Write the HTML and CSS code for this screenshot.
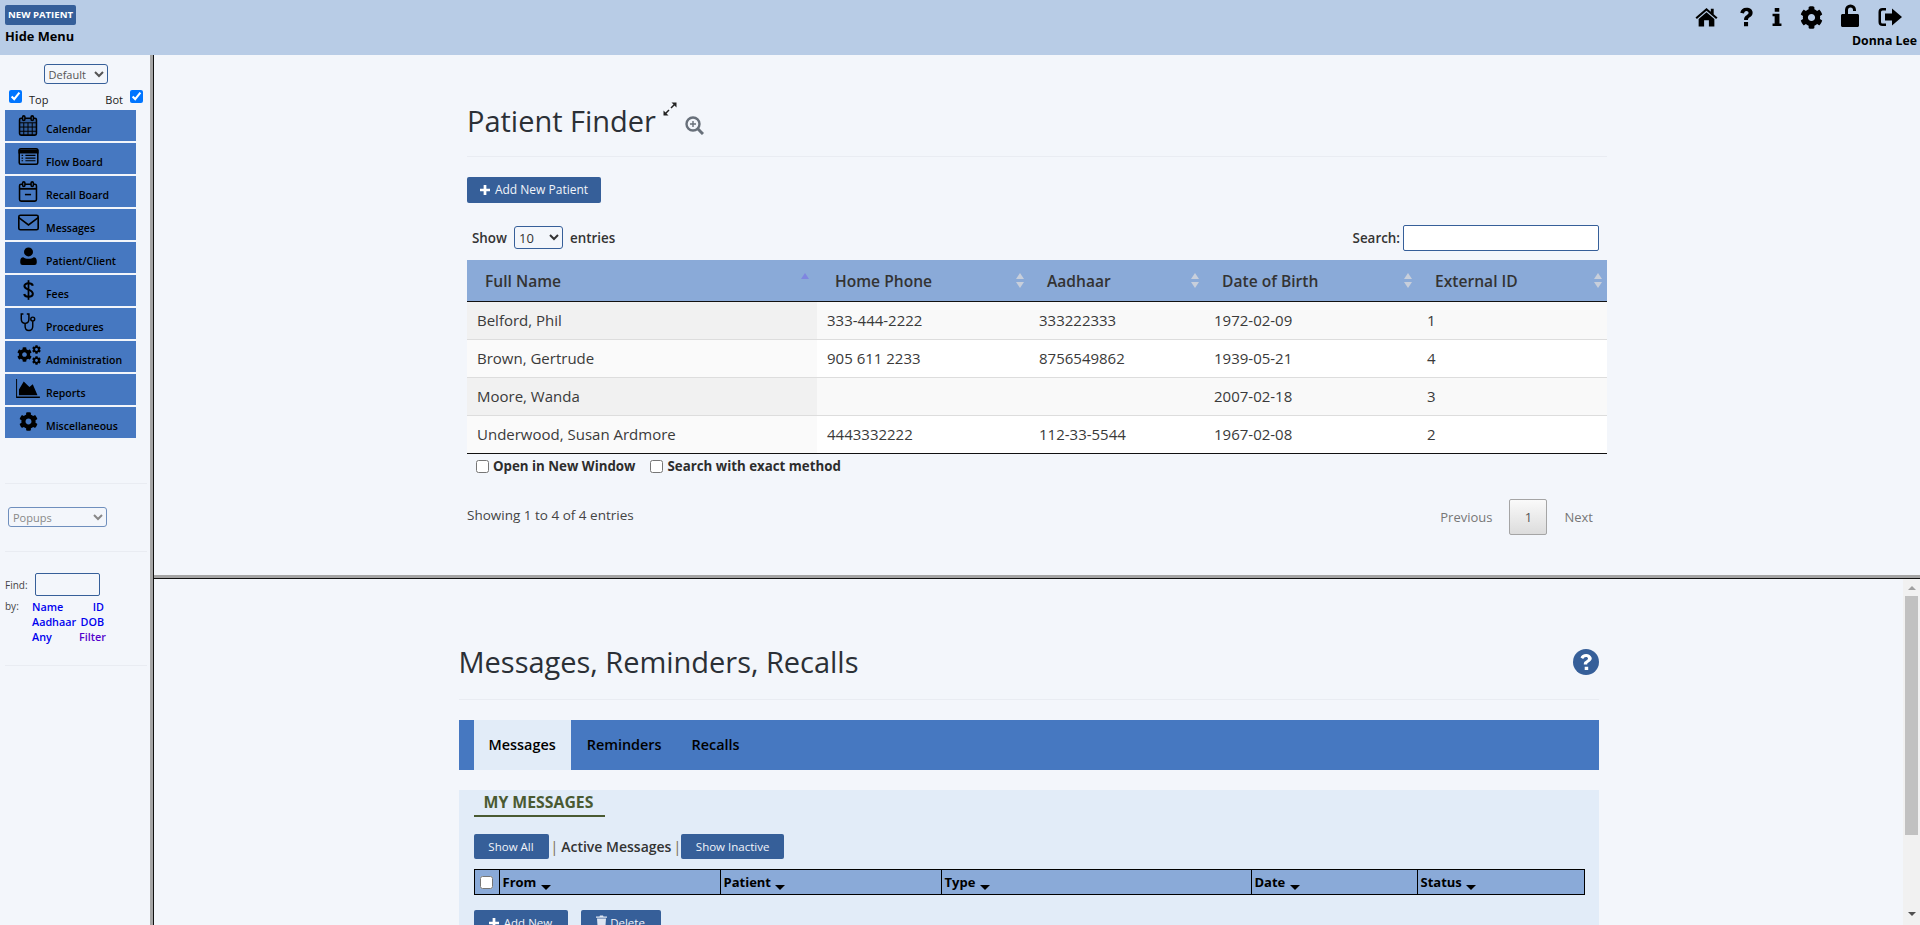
FILE: index.html
```html
<!DOCTYPE html>
<html lang="en">
<head>
  <meta charset="UTF-8">
  <title>OpenEMR</title>
  <link rel="stylesheet" href="styles.css">
</head>
<body>

  <svg class="defs" width="0" height="0">
    <symbol id="cog" viewBox="0 0 512 512">
      <path d="M487.4 315.7l-42.6-24.6c4.3-23.2 4.3-47 0-70.2l42.6-24.6c4.9-2.8 7.1-8.6 5.5-14-11.1-35.6-30-67.8-54.7-94.6-3.8-4.1-10-5.1-14.8-2.3L380.8 110c-17.9-15.4-38.5-27.3-60.8-35.1V25.8c0-5.6-3.9-10.5-9.4-11.7-36.7-8.2-74.3-7.8-109.2 0-5.5 1.2-9.4 6.1-9.4 11.7V75c-22.2 7.9-42.8 19.8-60.8 35.1L88.7 85.5c-4.9-2.8-11-1.9-14.8 2.3-24.7 26.7-43.6 58.9-54.7 94.6-1.7 5.4.6 11.2 5.5 14L67.3 221c-4.3 23.2-4.3 47 0 70.2l-42.6 24.6c-4.9 2.8-7.1 8.6-5.5 14 11.1 35.6 30 67.8 54.7 94.6 3.8 4.1 10 5.1 14.8 2.3l42.6-24.6c17.9 15.4 38.5 27.3 60.8 35.1v49.2c0 5.6 3.9 10.5 9.4 11.7 36.7 8.2 74.3 7.8 109.2 0 5.5-1.2 9.4-6.1 9.4-11.7v-49.2c22.2-7.9 42.8-19.8 60.8-35.1l42.6 24.6c4.9 2.8 11 1.9 14.8-2.3 24.7-26.7 43.6-58.9 54.7-94.6 1.5-5.5-.7-11.3-5.6-14.1zM256 336c-44.1 0-80-35.9-80-80s35.9-80 80-80 80 35.9 80 80-35.9 80-80 80z"/>
    </symbol>
    <symbol id="plus" viewBox="0 0 11 11">
      <path d="M4 0h3v4h4v3H7v4H4V7H0V4h4z"/>
    </symbol>
  </svg>

  <!-- Top bar -->
  <header class="topbar">
    <div class="topbar-left">
      <a class="new-patient">NEW PATIENT</a>
      <div class="hide-menu">Hide Menu</div>
    </div>
    <div class="topbar-right">
      <div class="top-icons">
        <svg class="ti ti-home" viewBox="0 0 24 20"><path d="M12 0.5 L0.5 10.5 L2 12 L12 3.4 L22 12 L23.5 10.5 L19.5 7 V1.5 H16.5 V4.4 Z M12 5 L3.8 12 V20 H9.5 V13.5 H14.5 V20 H20.2 V12 Z"/></svg>
        <svg class="ti ti-help" viewBox="0 0 14 20"><path d="M7 0C3 0 .8 2.2.3 5.4l4 .8C4.6 4.6 5.4 3.6 6.9 3.6c1.3 0 2.3.8 2.3 1.9 0 1-.7 1.6-2 2.5-1.8 1.2-2.8 2.4-2.8 4.4v.8h4.2v-.5c0-1 .5-1.5 1.9-2.5C12.300 9.100 13.600 7.800 13.600 5.300 13.600 2.100 10.900 0 7 0zM4.300 15.500h4.400V20H4.300z"/></svg>
        <svg class="ti ti-info" viewBox="0 0 11 20"><path d="M3 0h5v4.200H3zM.6 6.300h7.600v10.900h2.200V20H.6v-2.800h2.300V9.100H.6z"/></svg>
        <svg class="ti ti-cog"><use href="#cog"/></svg>
        <svg class="ti ti-unlock" viewBox="0 0 18 23"><path d="M4 10V6a5.500 5.500 0 0 1 11 0v1h-3V6a2.500 2.500 0 0 0-5 0v4h9.500c.8 0 1.500.7 1.500 1.500v10c0 .8-.7 1.500-1.500 1.500H1.500C.7 23 0 22.300 0 21.500v-10C0 10.700.7 10 1.500 10z"/></svg>
        <svg class="ti ti-signout" viewBox="0 0 24 20"><path d="M8 1H4.500A4 4 0 0 0 .5 5v10a4 4 0 0 0 4 4H8v-2.500H4.500A1.500 1.500 0 0 1 3 15V5a1.500 1.500 0 0 1 1.500-1.500H8zM14 1.500L24 10 14 18.500V13.500H7v-7h7z"/></svg>
      </div>
      <div class="user-name">Donna Lee</div>
    </div>
  </header>

  <div class="layout">

    <!-- Left menu -->
    <aside class="sidebar">
      <div class="side-select">
        <select class="sel-default"><option>Default</option></select>
      </div>
      <div class="side-checks">
        <label class="chk-top"><input type="checkbox" checked><span>Top</span></label>
        <label class="chk-bot"><span>Bot</span><input type="checkbox" checked></label>
      </div>

      <nav class="menu">
        <a class="menu-item">
          <span class="mi-icon"><svg width="20" height="21" viewBox="0 0 26 27" fill="none" stroke="#000" stroke-width="2"><rect x="2" y="4" width="22" height="22" rx="2" fill="#2f5a97"/><path d="M2 10h22M2 15.500h22M2 21h22M7.500 10v16M13 10v16M18.500 10v16" stroke-width="1.300"/><rect x="6" y="1" width="3" height="6" rx="1.500" fill="#4678c1"/><rect x="17" y="1" width="3" height="6" rx="1.500" fill="#4678c1"/></svg></span>
          <span>Calendar</span>
        </a>
        <a class="menu-item">
          <span class="mi-icon"><svg width="21" height="17" viewBox="0 0 26 22" fill="none" stroke="#000" stroke-width="2"><rect x="1" y="1" width="24" height="20" rx="2"/><path d="M1 3h24v3H1z" fill="#000"/><path d="M9 9.500h13M9 13h13M9 16.500h13M4 9.500h2M4 13h2M4 16.500h2" stroke-width="1.600"/></svg></span>
          <span>Flow Board</span>
        </a>
        <a class="menu-item">
          <span class="mi-icon"><svg width="20" height="21" viewBox="0 0 26 27" fill="none" stroke="#000" stroke-width="2"><rect x="2" y="4" width="22" height="22" rx="2"/><path d="M2 10h22" stroke-width="2.400"/><path d="M9 17.500h8"/><rect x="6" y="1" width="3" height="6" rx="1.500" fill="#4678c1"/><rect x="17" y="1" width="3" height="6" rx="1.500" fill="#4678c1"/></svg></span>
          <span>Recall Board</span>
        </a>
        <a class="menu-item">
          <span class="mi-icon"><svg width="21" height="17" viewBox="0 0 26 20" fill="none" stroke="#000" stroke-width="2"><rect x="1" y="1" width="24" height="18" rx="2"/><path d="M1 4l12 9 12-9"/></svg></span>
          <span>Messages</span>
        </a>
        <a class="menu-item">
          <span class="mi-icon"><svg width="17" height="18" viewBox="0 0 22 24"><circle cx="11" cy="6.500" r="6"/><path d="M4 13.500c2 1.500 4 2 7 2s5-.5 7-2c2.500 0 4 2 4 5v2.500a3 3 0 0 1-3 3H3a3 3 0 0 1-3-3v-2.500c0-3 1.500-5 4-5z"/></svg></span>
          <span>Patient/Client</span>
        </a>
        <a class="menu-item">
          <span class="mi-icon"><svg width="11" height="20" viewBox="0 0 14 25" fill="none" stroke="#000" stroke-width="2.600"><path d="M12.500 7C12 4.800 10 4 7 4S1.800 5.200 1.800 7.500c0 5 10.700 4 10.700 9.800 0 2.500-2.500 3.700-5.500 3.700S2 20 1.500 17.500"/><path d="M7 0v25" stroke-width="2.200"/></svg></span>
          <span>Fees</span>
        </a>
        <a class="menu-item">
          <span class="mi-icon"><svg width="17" height="19" viewBox="0 0 20 22" fill="none" stroke="#000" stroke-width="1.700"><path d="M4 1H1.500v6c0 3 2 5 4.500 5s4.500-2 4.500-5V1H8"/><path d="M6 12v3.500c0 3 2 5 4.500 5s4.500-2 4.500-5V9.500"/><circle cx="15" cy="7" r="2.300"/></svg></span>
          <span>Procedures</span>
        </a>
        <a class="menu-item">
          <span class="mi-icon mi-cogs">
            <svg class="cog-big"><use href="#cog"/></svg>
            <svg class="cog-small"><use href="#cog"/></svg>
            <svg class="cog-small"><use href="#cog"/></svg>
          </span>
          <span>Administration</span>
        </a>
        <a class="menu-item">
          <span class="mi-icon"><svg width="24" height="19" viewBox="0 0 25 20"><path d="M0 0h1v18.500h24V20H0z"/><path d="M3 17V11L8 2.500l6 6 3.500-3 5 11.500z"/></svg></span>
          <span>Reports</span>
        </a>
        <a class="menu-item">
          <span class="mi-icon"><svg width="19" height="19"><use href="#cog"/></svg></span>
          <span>Miscellaneous</span>
        </a>
      </nav>

      <hr class="side-rule first-rule">
      <div class="side-popups">
        <select class="sel-popups"><option>Popups</option></select>
      </div>
      <hr class="side-rule">
      <div class="find-box">
        <div class="find-row"><span>Find:</span><input type="text" class="find-input"></div>
        <div class="find-by">
          <span class="by-label">by:</span>
          <a>Name</a><a class="r">ID</a>
          <span></span>
          <a>Aadhaar</a><a class="r">DOB</a>
          <span></span>
          <a>Any</a><a class="r filter">Filter</a>
        </div>
      </div>
      <hr class="side-rule">
    </aside>

    <div class="frames">

      <!-- Top frame -->
      <section class="frame-top">
        <div class="container">
          <div class="title-row">
            <h2>Patient Finder</h2>
            <svg class="icon-expand" width="14" height="14" viewBox="0 0 14 14" fill="none" stroke="#222" stroke-width="1.500"><path d="M2 12L6 8M8 6L12 2"/><path d="M.5 8.500v5h5z" fill="#222" stroke="none"/><path d="M13.500 5.500v-5h-5z" fill="#222" stroke="none"/></svg>
            <svg class="icon-zoom" width="19" height="19" viewBox="0 0 19 19" fill="none" stroke="#68707a" stroke-width="2.400"><circle cx="8" cy="8" r="6.500"/><path d="M12.500 12.500L18 18" stroke-width="3"/><path d="M8 5v6M5 8h6" stroke-width="1.400"/></svg>
          </div>
          <hr class="title-rule">
          <a class="btn btn-add"><svg class="plus"><use href="#plus"/></svg>Add New Patient</a>

          <div class="table-tools">
            <label class="len">Show <select class="sel-len"><option>10</option></select> entries</label>
            <label class="search">Search: <input type="text"></label>
          </div>

          <table class="pt-table">
            <colgroup>
              <col class="c-name"><col class="c-phone"><col class="c-aadhaar"><col class="c-dob"><col class="c-ext">
            </colgroup>
            <thead>
              <tr>
                <th class="sort-asc">Full Name</th>
                <th>Home Phone</th>
                <th>Aadhaar</th>
                <th>Date of Birth</th>
                <th>External ID</th>
              </tr>
            </thead>
            <tbody>
              <tr><td>Belford, Phil</td><td>333-444-2222</td><td>333222333</td><td>1972-02-09</td><td>1</td></tr>
              <tr><td>Brown, Gertrude</td><td>905 611 2233</td><td>8756549862</td><td>1939-05-21</td><td>4</td></tr>
              <tr><td>Moore, Wanda</td><td></td><td></td><td>2007-02-18</td><td>3</td></tr>
              <tr><td>Underwood, Susan Ardmore</td><td>4443332222</td><td>112-33-5544</td><td>1967-02-08</td><td>2</td></tr>
            </tbody>
          </table>

          <div class="table-opts">
            <label><input type="checkbox">Open in New Window</label>
            <label><input type="checkbox">Search with exact method</label>
          </div>

          <div class="table-foot">
            <div class="info">Showing 1 to 4 of 4 entries</div>
            <div class="pager">
              <a>Previous</a>
              <a class="current">1</a>
              <a>Next</a>
            </div>
          </div>
        </div>
      </section>

      <!-- Bottom frame -->
      <section class="frame-bottom">
        <div class="frame-scroll">
          <div class="container">
            <div class="title-row msg-title">
              <h2>Messages, Reminders, Recalls</h2>
              <svg class="icon-help" width="26" height="26" viewBox="0 0 26 26"><circle cx="13" cy="13" r="13" fill="#365f99"/><path fill="#fff" d="M13.200 5c-3 0-4.800 1.400-5.700 3.500l2.700 1.500c.6-1.200 1.400-2 2.800-2 1.200 0 2 .6 2 1.500 0 .8-.6 1.200-1.700 1.900-1.400.8-2.500 1.700-2.500 3.400v.7h3.400v-.4c0-.8.500-1.200 1.600-1.900 1.500-.9 3-2 3-4.100C17.800 6.500 15.700 5 13.200 5zM11.700 17.700h3.500V21h-3.500z"/></svg>
            </div>
            <hr class="title-rule">

            <ul class="tabs">
              <li class="active">Messages</li>
              <li>Reminders</li>
              <li>Recalls</li>
            </ul>

            <div class="panel">
              <div class="panel-title">MY MESSAGES</div>
              <div class="msg-filter">
                <a class="btn btn-sm">Show All</a>
                <span class="sep">|</span><b>Active Messages</b><span class="sep sep-end">|</span>
                <a class="btn btn-sm btn-inactive">Show Inactive</a>
              </div>
              <table class="msg-table">
                <colgroup>
                  <col class="m-check"><col class="m-from"><col class="m-patient"><col class="m-type"><col class="m-date"><col class="m-status">
                </colgroup>
                <tr>
                  <th class="th-check"><input type="checkbox"></th>
                  <th>From <i class="caret"></i></th>
                  <th>Patient <i class="caret"></i></th>
                  <th>Type <i class="caret"></i></th>
                  <th>Date <i class="caret"></i></th>
                  <th>Status <i class="caret"></i></th>
                </tr>
              </table>
              <div class="msg-actions">
                <a class="btn btn-sm btn-new"><svg class="plus"><use href="#plus"/></svg>Add New</a>
                <a class="btn btn-sm btn-del">
                  <svg width="11" height="12" viewBox="0 0 11 12" fill="#dfe6f2"><path d="M0 1.500h3.500L4 .5h3l.5 1H11v1.200H0zM1 3.500h9l-.6 8.500H1.600z"/></svg>
                  Delete
                </a>
              </div>
            </div>
          </div>
        </div>
        <div class="scrollbar">
          <i class="arr-up"></i>
          <div class="thumb"></div>
          <i class="arr-down"></i>
        </div>
      </section>

    </div>
  </div>

</body>
</html>
```

FILE: styles.css
```css
* { box-sizing: border-box; }

html, body {
  margin: 0;
  padding: 0;
  height: 925px;
  overflow: hidden;
}

body {
  background: #f3f6fb;
  font-family: 'Open Sans', 'Noto Sans', sans-serif;
  color: #333;
  font-size: 14px;
  display: flex;
  flex-direction: column;
}

.defs { position: absolute; }

/* top bar */
.topbar {
  height: 55px;
  flex: none;
  background: #b8cce6;
  display: flex;
  justify-content: space-between;
  color: #000;
}

.topbar-left { padding: 5px 0 0 5px; }

.new-patient {
  display: block;
  width: 71px;
  height: 20px;
  background: #365f99;
  color: #fff;
  border-radius: 2px;
  font-size: 9.6px;
  font-weight: 700;
  line-height: 20px;
  text-align: center;
  white-space: nowrap;
}

.hide-menu {
  font-size: 12.8px;
  font-weight: 700;
  margin-top: 3px;
  line-height: 16px;
}

.topbar-right {
  display: flex;
  flex-direction: column;
  align-items: flex-end;
}

.top-icons {
  height: 33px;
  width: 225px;
  display: flex;
  align-items: flex-start;
}

.ti { display: block; flex: none; margin-top: 7px; }
.ti-home { width: 23px; height: 20px; }
.ti-help { width: 13px; height: 20px; margin-left: 22px; }
.ti-info { width: 10px; height: 20px; margin-left: 19px; }
.ti-cog { width: 23px; height: 23px; margin-left: 18px; margin-top: 6px; }
.ti-unlock { width: 18px; height: 23px; margin-left: 18px; margin-top: 4px; }
.ti-signout { width: 24px; height: 20px; margin-left: 19px; }

.user-name {
  font-size: 12.3px;
  font-weight: 700;
  margin-right: 3px;
  line-height: 16px;
}

.layout {
  flex: 1;
  display: flex;
  min-height: 0;
  overflow: hidden;
}

/* left menu */
.sidebar {
  width: 154px;
  flex: none;
  border-right: 1px solid #111;
  box-shadow: inset -3px 0 0 #a5a5a5;
  padding: 9px 0 0;
  font-size: 10px;
}

.side-select { display: flex; justify-content: center; padding-right: 2px; }

select {
  font-family: inherit;
  background: #fff;
  border: 1px solid #365f99;
  border-radius: 3px;
  color: #555;
}

.sel-default {
  width: 64px;
  height: 20px;
  font-size: 11px;
  padding: 0;
  background: #f3f6fb;
}

.side-checks {
  display: flex;
  justify-content: space-between;
  padding: 6px 7px 0 9px;
  height: 26px;
  width: 150px;
  color: #222;
}

.side-checks label { display: flex; align-items: flex-start; gap: 7px; font-size: 11px; }
.side-checks span { margin-top: 2px; }
.side-checks input { width: 13px; height: 13px; margin: 0; }

.menu {
  display: flex;
  flex-direction: column;
  gap: 2px;
  margin-left: 5px;
  width: 131px;
}

.menu-item {
  height: 31px;
  background: #4678c1;
  display: flex;
  align-items: flex-end;
  color: #000;
  font-size: 10.5px;
  font-weight: 600;
  padding-bottom: 5px;
  white-space: nowrap;
}

.mi-icon {
  width: 41px;
  height: 26px;
  flex: none;
  display: flex;
  align-items: flex-start;
  justify-content: center;
  align-self: flex-start;
  padding: 5px 0 0 5px;
}

.mi-cogs { position: relative; }
.cog-big { position: absolute; left: 12px; top: 6px; width: 15px; height: 15px; }
.cog-small { position: absolute; left: 27px; top: 4px; width: 9px; height: 9px; }
.cog-small + .cog-small { top: 15px; }

.side-rule {
  border: 0;
  border-top: 1px solid #e9ecf2;
  margin: 0 5px;
  width: 142px;
}

.first-rule { margin-top: 45px; }

.side-popups { padding: 23px 0 24px 8px; }

.sel-popups {
  width: 99px;
  height: 20px;
  font-size: 11px;
  color: #888;
  padding: 0;
  display: block;
  background: #f3f6fb;
  border-color: #6f8fbd;
}

.find-box { padding: 21px 0 0 5px; color: #444; height: 113px; }
.find-row { display: flex; align-items: center; gap: 7px; }

.find-input {
  width: 65px;
  height: 23px;
  border: 1px solid #365f99;
  border-radius: 2px;
  background: #f3f6fb;
}

.find-by {
  display: grid;
  grid-template-columns: 27px 47px 25px;
  line-height: 15px;
  margin-top: 3px;
  font-weight: 600;
  font-size: 10.8px;
}

.find-by a { color: #0000ee; white-space: nowrap; }
.find-by .r { text-align: right; }
.find-by .filter { color: #5500cc; }
.by-label { font-weight: 400; font-size: 10px; }

/* right frames */
.frames {
  flex: 1;
  min-width: 0;
  display: flex;
  flex-direction: column;
}

.frame-top {
  height: 524px;
  flex: none;
  border-bottom: 1px solid #111;
  box-shadow: inset 0 -3px 0 #a5a5a5;
}

.container {
  width: 1140px;
  margin: 0 auto;
}

.title-row {
  display: flex;
  align-items: flex-start;
  height: 101px;
  padding-top: 46px;
}

h2 {
  margin: 0;
  font-size: 29px;
  font-weight: 400;
  line-height: 40px;
  letter-spacing: -0.02px;
  color: #2b3036;
}

.icon-expand { margin: 1px 0 0 7px; }
.icon-zoom { margin: 15px 0 0 8px; }

.title-rule {
  border: 0;
  border-top: 1px solid #e9ecf2;
  margin: 0;
}

.btn {
  display: inline-block;
  background: #365f99;
  color: #f1f4fa;
  border-radius: 2px;
  white-space: nowrap;
}

.btn-add {
  margin-top: 20px;
  width: 134px;
  height: 26px;
  font-size: 12px;
  line-height: 26px;
  text-align: center;
}

.plus {
  width: 10px;
  height: 10px;
  fill: #fff;
  margin-right: 5px;
  vertical-align: -1px;
}

.table-tools {
  height: 57px;
  display: flex;
  justify-content: space-between;
  align-items: flex-start;
  font-size: 13.4px;
  font-weight: 600;
  padding: 0 8px 0 5px;
  color: #333;
}

.len { margin-top: 23px; display: flex; align-items: center; gap: 7px; }

.sel-len {
  width: 49px;
  height: 23px;
  font-size: 13px;
  color: #333;
  background: #f3f6fb;
}

.search { margin-top: 22px; display: flex; align-items: center; gap: 3px; }

.search input {
  width: 196px;
  height: 26px;
  border: 1px solid #365f99;
  border-radius: 2px;
  background: #fff;
}

.pt-table {
  width: 1140px;
  table-layout: fixed;
  border-collapse: collapse;
  font-size: 15px;
}

.c-name { width: 350px; }
.c-phone { width: 212px; }
.c-aadhaar { width: 175px; }
.c-dob { width: 213px; }
.c-ext { width: 190px; }

.pt-table th {
  height: 41px;
  background: #8aaad8;
  border-bottom: 1px solid #111;
  text-align: left;
  padding: 2px 0 0 18px;
  font-size: 15.6px;
  font-weight: 600;
  color: #333;
  position: relative;
}

/* sort arrows */
.pt-table th::before,
.pt-table th::after {
  content: '';
  position: absolute;
  right: 5px;
  border-left: 4.5px solid transparent;
  border-right: 4.5px solid transparent;
}

.pt-table th::before { top: 13px; border-bottom: 6px solid #c8cfdb; }
.pt-table th::after { top: 22px; border-top: 6px solid #c8cfdb; }
.pt-table th.sort-asc::before { border-bottom-color: #7f86e0; right: 8px; }
.pt-table th.sort-asc::after { display: none; }

.pt-table td {
  height: 38px;
  padding: 0 0 0 10px;
  border-top: 1px solid #ddd;
  color: #3a3a3a;
  background: #fff;
}

.pt-table tbody tr:first-child td { border-top: 0; }
.pt-table tbody tr:nth-child(odd) td { background: #f9f9f9; }
.pt-table tbody tr:nth-child(odd) td:first-child { background: #f1f1f1; }
.pt-table tbody tr:nth-child(even) td:first-child { background: #fafafa; }
.pt-table tbody tr:last-child td { border-bottom: 1px solid #111; }

.table-opts {
  display: flex;
  gap: 15px;
  padding: 0 0 0 9px;
  font-size: 13.3px;
  font-weight: 700;
  height: 25px;
  color: #2d2d2d;
}

.table-opts label { display: flex; align-items: center; gap: 4px; }
.table-opts input { width: 13px; height: 13px; margin: 0; }

.table-foot {
  display: flex;
  justify-content: space-between;
  margin-top: 20px;
}

.info { font-size: 13.5px; margin-top: 7px; color: #444; }

.pager {
  display: flex;
  align-items: center;
  font-size: 13px;
  color: #777;
  padding-right: 14px;
  height: 36px;
}

.pager .current {
  width: 38px;
  height: 36px;
  line-height: 34px;
  text-align: center;
  border: 1px solid #a5a5a5;
  border-radius: 2px;
  background: linear-gradient(#fafafa, #dcdcdc);
  color: #555;
  margin: 0 17px;
}

.frame-bottom {
  flex: 1;
  min-height: 0;
  display: flex;
}

.frame-scroll {
  flex: 1;
  min-width: 0;
  overflow: hidden;
}

.msg-title {
  justify-content: space-between;
  height: 120px;
  padding-top: 63px;
}

.icon-help { margin-top: 7px; }

.tabs {
  list-style: none;
  margin: 20px 0 0;
  padding: 0 0 0 15px;
  height: 50px;
  background: #4678c1;
  display: flex;
  color: #000;
  font-size: 14.4px;
  font-weight: 600;
}

.tabs li {
  padding: 0 15px;
  line-height: 50px;
}

.tabs .active { background: #e2ecf8; margin-right: 1px; }

.panel {
  margin-top: 20px;
  background: #e2ecf8;
  padding: 0 15px;
  height: 200px;
}

.panel-title {
  width: 131px;
  height: 27px;
  border-bottom: 2px solid #4a5a32;
  padding-left: 10px;
  color: #4a5a32;
  font-size: 15.8px;
  font-weight: 700;
  line-height: 24px;
  white-space: nowrap;
}

.msg-filter {
  display: flex;
  align-items: center;
  margin-top: 17px;
  height: 25px;
  font-size: 14px;
  color: #333;
}

.msg-filter b { font-weight: 600; margin: 0 2px 0 3px; }
.sep { margin-left: 2px; color: #7a6a50; }
.sep-end { margin: 0; }

.btn-sm {
  height: 25px;
  line-height: 25px;
  font-size: 11.5px;
  text-align: center;
  width: 75px;
}

.btn-inactive { width: 103px; }

.msg-table {
  width: 1110px;
  table-layout: fixed;
  border-collapse: collapse;
  margin-top: 10px;
}

.m-check { width: 25px; }
.m-from { width: 221px; }
.m-patient { width: 221px; }
.m-type { width: 310px; }
.m-date { width: 166px; }
.m-status { width: 167px; }

.msg-table th {
  height: 25px;
  background: #8aaad8;
  border: 1px solid #000;
  color: #000;
  text-align: left;
  font-size: 13px;
  font-weight: 700;
  padding: 0 0 0 3px;
}

.msg-table .th-check { padding: 0 0 0 5px; }
.th-check input { width: 13px; height: 13px; margin: 0; display: block; }

.caret {
  display: inline-block;
  border-left: 5px solid transparent;
  border-right: 5px solid transparent;
  border-top: 5px solid #000;
  margin-left: 1px;
  vertical-align: -3px;
}

.msg-actions {
  display: flex;
  gap: 13px;
  margin-top: 15px;
}

.btn-new { width: 94px; }
.btn-del { width: 80px; }

/* scrollbar of the bottom frame */
.scrollbar {
  width: 17px;
  flex: none;
  background: #f1f1f1;
  display: flex;
  flex-direction: column;
  align-items: center;
}

.thumb {
  width: 13px;
  height: 239px;
  background: #c1c1c1;
  margin-top: 6px;
  flex: none;
}

.arr-up, .arr-down {
  display: block;
  border-left: 4px solid transparent;
  border-right: 4px solid transparent;
  flex: none;
}

.arr-up { border-bottom: 4px solid #a0a0a0; margin-top: 7px; }
.arr-down { border-top: 4px solid #505050; margin-top: auto; margin-bottom: 9px; }
```
